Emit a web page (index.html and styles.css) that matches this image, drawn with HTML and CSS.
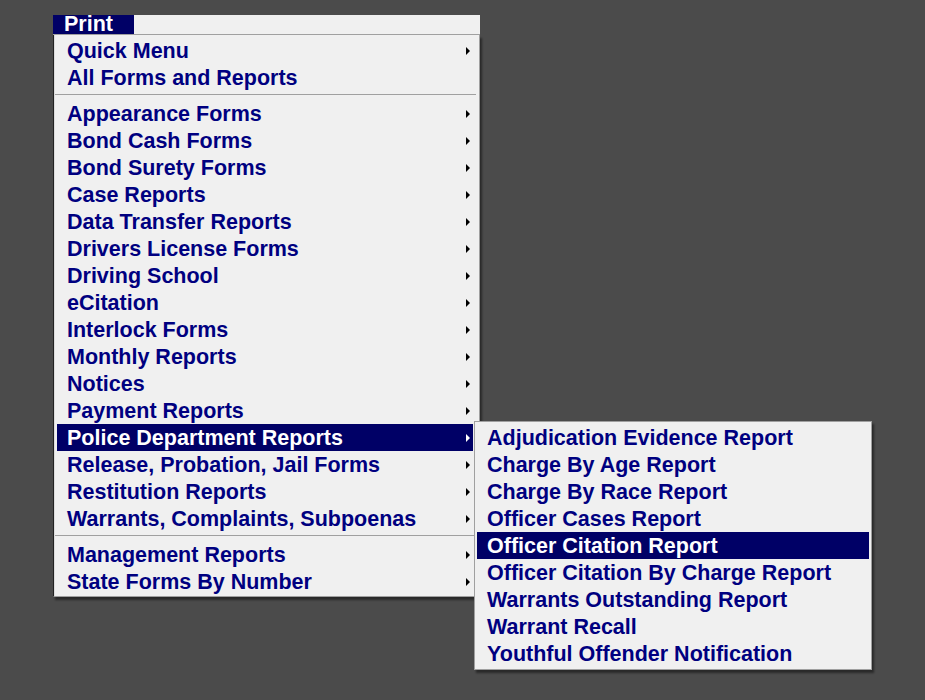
FILE: index.html
```html
<!DOCTYPE html>
<html>
<head>
<meta charset="utf-8">
<title>Print</title>
<link rel="stylesheet" href="styles.css">
</head>
<body>
<div class="screen">
  <div class="menubar"><span class="bar-title">Print</span></div>
  <div class="menu">
    <div class="item"><span>Quick Menu</span><i class="arrow"></i></div>
    <div class="item"><span>All Forms and Reports</span></div>
    <div class="sep"></div>
    <div class="item"><span>Appearance Forms</span><i class="arrow"></i></div>
    <div class="item"><span>Bond Cash Forms</span><i class="arrow"></i></div>
    <div class="item"><span>Bond Surety Forms</span><i class="arrow"></i></div>
    <div class="item"><span>Case Reports</span><i class="arrow"></i></div>
    <div class="item"><span>Data Transfer Reports</span><i class="arrow"></i></div>
    <div class="item"><span>Drivers License Forms</span><i class="arrow"></i></div>
    <div class="item"><span>Driving School</span><i class="arrow"></i></div>
    <div class="item"><span>eCitation</span><i class="arrow"></i></div>
    <div class="item"><span>Interlock Forms</span><i class="arrow"></i></div>
    <div class="item"><span>Monthly Reports</span><i class="arrow"></i></div>
    <div class="item"><span>Notices</span><i class="arrow"></i></div>
    <div class="item"><span>Payment Reports</span><i class="arrow"></i></div>
    <div class="item active has-sub"><span>Police Department Reports</span><i class="arrow"></i>
      <div class="submenu">
        <div class="item"><span>Adjudication Evidence Report</span></div>
        <div class="item"><span>Charge By Age Report</span></div>
        <div class="item"><span>Charge By Race Report</span></div>
        <div class="item"><span>Officer Cases Report</span></div>
        <div class="item active"><span>Officer Citation Report</span></div>
        <div class="item"><span>Officer Citation By Charge Report</span></div>
        <div class="item"><span>Warrants Outstanding Report</span></div>
        <div class="item"><span>Warrant Recall</span></div>
        <div class="item"><span>Youthful Offender Notification</span></div>
      </div>
    </div>
    <div class="item"><span>Release, Probation, Jail Forms</span><i class="arrow"></i></div>
    <div class="item"><span>Restitution Reports</span><i class="arrow"></i></div>
    <div class="item"><span>Warrants, Complaints, Subpoenas</span><i class="arrow"></i></div>
    <div class="sep"></div>
    <div class="item"><span>Management Reports</span><i class="arrow"></i></div>
    <div class="item"><span>State Forms By Number</span><i class="arrow"></i></div>
  </div>
</div>
</body>
</html>
```

FILE: styles.css
```css
html, body {
  margin: 0;
  padding: 0;
  background: #4b4b4b;
  height: 100%;
}
body {
  font-family: "Liberation Sans", Arial, sans-serif;
  font-weight: bold;
  font-size: 21.5px;
  color: #000080;
}
.screen {
  padding: 15px 0 0 53px;
}
.menubar {
  width: 427px;
  height: 19px;
  box-sizing: content-box;
  background: #f0f0f0;
  border-bottom: 1px solid #a0a0a0;
  display: flex;
}
.bar-title {
  width: 70px;
  padding-left: 11px;
  background: #000066;
  color: #ffffff;
  line-height: 19px;
  height: 19px;
}
.menu {
  position: relative;
  width: 427px;
  box-sizing: border-box;
  background: #f0f0f0;
  border-left: 1px solid #222222;
  border-right: 1px solid #a0a0a0;
  border-bottom: 1px solid #a0a0a0;
  padding: 2px 6px 1px 3px;
  box-shadow: inset 1px 0 0 #dcdcdc, 2px 3px 2px rgba(0,0,0,0.45);
}
.item {
  position: relative;
  height: 27px;
  box-sizing: border-box;
  line-height: 25px;
  padding: 2px 3px 0 10px;
  display: flex;
  justify-content: space-between;
  align-items: center;
  white-space: nowrap;
}
.item.active {
  background: #000066;
  color: #ffffff;
}
.arrow {
  display: block;
  width: 0;
  height: 0;
  margin-top: -2px;
  border-left: 4px solid #000000;
  border-top: 4px solid transparent;
  border-bottom: 4px solid transparent;
}
.item.active > .arrow {
  border-left-color: #ffffff;
}
.sep {
  height: 1px;
  background: #a0a0a0;
  margin: 3px -3px 5px -2px;
}
.submenu {
  position: absolute;
  left: calc(100% + 1px);
  top: -3px;
  width: 398px;
  box-sizing: border-box;
  background: #f0f0f0;
  border: 1px solid #a0a0a0;
  padding: 2px;
  color: #000080;
  box-shadow: 2px 3px 2px rgba(0,0,0,0.45);
  z-index: 2;
}
.submenu .item.active {
  color: #ffffff;
}
```
